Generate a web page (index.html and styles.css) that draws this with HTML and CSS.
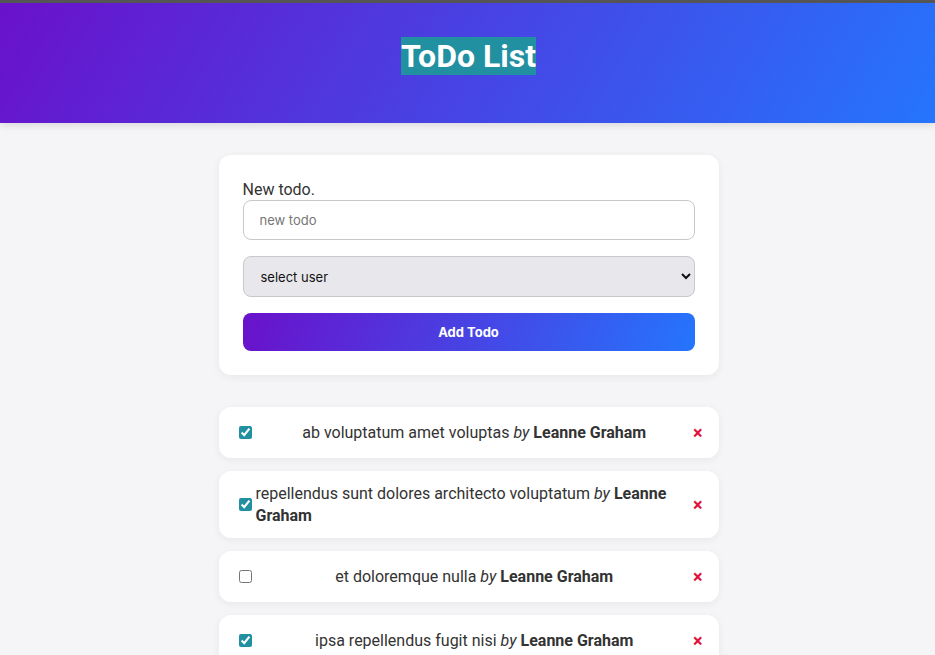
FILE: index.html
```html
<!DOCTYPE html>
<html lang="en">
<head>
<meta charset="utf-8">
<title>ToDo List</title>
<link rel="stylesheet" href="styles.css">
</head>
<body>
<header class="header">
  <h1 class="title"><span class="title-text">ToDo List</span></h1>
</header>
<div class="page">
<main class="main">
  <form class="card form">
    <label class="label" for="new">New todo.</label>
    <input class="input" id="new" type="text" placeholder="new todo">
    <select class="select">
      <option>select user</option>
    </select>
    <button class="add" type="button">Add Todo</button>
  </form>
  <ul class="list">
    <li class="item">
      <input class="check" type="checkbox" checked>
      <span class="text">ab voluptatum amet voluptas <em>by</em> <strong>Leanne Graham</strong></span>
      <button class="del" type="button">×</button>
    </li>
    <li class="item">
      <input class="check" type="checkbox" checked>
      <span class="text">repellendus sunt dolores architecto voluptatum <em>by</em> <strong>Leanne Graham</strong></span>
      <button class="del" type="button">×</button>
    </li>
    <li class="item">
      <input class="check" type="checkbox">
      <span class="text">et doloremque nulla <em>by</em> <strong>Leanne Graham</strong></span>
      <button class="del" type="button">×</button>
    </li>
    <li class="item">
      <input class="check" type="checkbox" checked>
      <span class="text">ipsa repellendus fugit nisi <em>by</em> <strong>Leanne Graham</strong></span>
      <button class="del" type="button">×</button>
    </li>
  </ul>
</main>
</div>
</body>
</html>
```
FILE: styles.css
```css
* { box-sizing: border-box; }
html, body { margin: 0; padding: 0; }
body {
  background: #f5f5f7;
  font-family: Roboto, "Liberation Sans", sans-serif;
  font-size: 16px;
  line-height: 1.3;
  color: #333;
  border-top: 3px solid #555;
}
.header {
  background: linear-gradient(120deg, #6a11cb 0%, #2575fc 100%);
  height: 120px;
  padding: 35px 0 0 2px;
  text-align: center;
  box-shadow: 0 2px 8px rgba(0,0,0,0.12);
  position: relative;
}
.title {
  margin: 0;
  font-size: 32px;
  font-weight: 700;
  line-height: 37px;
  color: #fff;
}
.title-text { background: #2190a0; }
.page { padding-left: 2px; }
.main {
  width: 500px;
  margin: 32px auto 0;
}
.card {
  background: #fff;
  border-radius: 12px;
  box-shadow: 0 2px 8px rgba(0,0,0,0.06);
}
.form {
  display: flex;
  flex-direction: column;
  padding: 24px;
}
.label { display: block; line-height: 21px; }
.input, .select {
  font-family: Inter, "Noto Sans", sans-serif;
  font-size: 13px;
  border: 1px solid #c9c9cc;
  border-radius: 8px;
  width: 100%;
}
.input {
  height: 40px;
  padding: 0 16px;
  color: #222;
  background: #fff;
}
.input::placeholder { color: #777; }
.select {
  margin-top: 16px;
  height: 41px;
  padding: 0 10px 0 13px;
  background: #e8e8ec;
  color: #111;
}
.add {
  margin-top: 16px;
  height: 38px;
  border: none;
  border-radius: 8px;
  background: linear-gradient(110deg, #6a11cb 0%, #2575fc 100%);
  color: #fff;
  font-family: Inter, "Noto Sans", sans-serif;
  font-size: 13px;
  font-weight: 700;
}
.list {
  list-style: none;
  margin: 32px 0 0;
  padding: 0;
  display: flex;
  flex-direction: column;
  gap: 13px;
}
.item {
  background: #fff;
  border-radius: 12px;
  box-shadow: 0 2px 8px rgba(0,0,0,0.06);
  display: flex;
  align-items: center;
  padding: 12px 16px;
}
.check {
  accent-color: #2190a0;
  margin: 3px 4px 3px 4px;
  width: 13px;
  height: 13px;
  flex: none;
}
.text {
  margin: 0 auto;
  text-align: left;
  line-height: 21.5px;
}
.text em { font-style: italic; }
.text strong { font-weight: 700; }
.del {
  flex: none;
  border: none;
  background: none;
  color: #e0123c;
  font-family: Roboto, sans-serif;
  font-size: 18px;
  font-weight: 700;
  line-height: 19px;
  padding: 4px 0;
  height: 27px;
}
```
